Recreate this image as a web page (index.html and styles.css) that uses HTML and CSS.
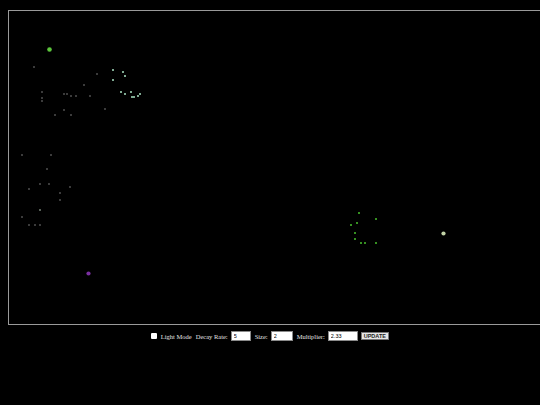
FILE: index.html
```html
<!DOCTYPE html>
<html>
<head>
<meta charset="utf-8">
<title>Particles</title>
<link rel="stylesheet" href="styles.css">
</head>
<body>
<div class="stage">
  <div class="board">
    <svg class="field" viewBox="9 11 560 313" width="560" height="313">
      <!-- faded trail particles -->
      <g class="dim">
        <circle cx="34" cy="67" r="1"/>
        <circle cx="97" cy="74" r="1"/>
        <circle cx="84" cy="85" r="1"/>
        <circle cx="42" cy="92" r="1"/>
        <circle cx="42" cy="98" r="1"/>
        <circle cx="42" cy="101" r="1"/>
        <circle cx="64" cy="94" r="1"/>
        <circle cx="67" cy="94" r="1"/>
        <circle cx="71" cy="96" r="1"/>
        <circle cx="76" cy="96" r="1"/>
        <circle cx="90" cy="96" r="1"/>
        <circle cx="105" cy="109" r="1"/>
        <circle cx="64" cy="110" r="1"/>
        <circle cx="55" cy="115" r="1"/>
        <circle cx="71" cy="115" r="1"/>
        <circle cx="22" cy="155" r="1"/>
        <circle cx="51" cy="155" r="1"/>
        <circle cx="47" cy="169" r="1"/>
        <circle cx="40" cy="184" r="1"/>
        <circle cx="49" cy="184" r="1"/>
        <circle cx="29" cy="189" r="1"/>
        <circle cx="70" cy="187" r="1"/>
        <circle cx="60" cy="193" r="1"/>
        <circle cx="60" cy="200" r="1"/>
        <circle cx="22" cy="217" r="1"/>
        <circle cx="29" cy="225" r="1"/>
        <circle cx="35" cy="225" r="1"/>
        <circle cx="40" cy="225" r="1"/>
      </g>
      <circle class="faded" cx="40" cy="210" r="1"/>
      <!-- mint cluster -->
      <g class="mint">
        <circle cx="113" cy="70" r="1"/>
        <circle cx="123" cy="72" r="1"/>
        <circle cx="125" cy="76" r="1"/>
        <circle cx="113" cy="80" r="1"/>
        <circle cx="121" cy="92" r="1"/>
        <circle cx="125" cy="94" r="1"/>
        <circle cx="131" cy="92" r="1"/>
        <circle cx="140" cy="94" r="1"/>
        <circle cx="138" cy="96" r="1"/>
        <circle cx="134" cy="97" r="1"/>
        <circle cx="132" cy="97" r="1"/>
      </g>
      <!-- green ring -->
      <g class="green">
        <circle cx="359" cy="213" r="1"/>
        <circle cx="376" cy="219" r="1"/>
        <circle cx="351" cy="225" r="1"/>
        <circle cx="357" cy="223" r="1"/>
        <circle cx="355" cy="233" r="1"/>
        <circle cx="355" cy="239" r="1"/>
        <circle cx="361" cy="243" r="1"/>
        <circle cx="365" cy="243" r="1"/>
        <circle cx="376" cy="243" r="1"/>
      </g>
      <!-- emitters -->
      <circle class="lime" cx="49.5" cy="49.5" r="2.3"/>
      <circle class="violet" cx="88.5" cy="273.5" r="2.1"/>
      <circle class="sage" cx="443.5" cy="233.5" r="2.1"/>
    </svg>
  </div>
</div>
<div class="controls">
  <label class="toggle"><input type="checkbox" class="check"> Light Mode</label>
  <label class="field-label" for="decay">Decay Rate:</label>
  <input id="decay" class="num w-decay" type="text" value="5">
  <label class="field-label" for="size">Size:</label>
  <input id="size" class="num w-size" type="text" value="2">
  <label class="field-label" for="mult">Multiplier:</label>
  <input id="mult" class="num w-mult" type="text" value="2.33">
  <button class="update" type="button">UPDATE</button>
</div>
</body>
</html>
```
FILE: styles.css
```css
html, body {
  margin: 0;
  padding: 0;
  background: #000;
  overflow: hidden;
}

body {
  font-family: "Liberation Serif", "Times New Roman", serif;
  color: #e4e4e4;
}

.stage {
  padding: 10px 0 0 8px;
  overflow: hidden;
}

.board {
  width: 560px;
  height: 313px;
  border: 1px solid #9a9a9a;
}

.field {
  display: block;
}

.dim circle { fill: #4f4f4f; }
.faded { fill: #748074; }
.mint circle { fill: #a8e2c2; }
.green circle { fill: #49c02c; }
.lime { fill: #5cc63c; }
.violet { fill: #7a2fa0; }
.sage { fill: #c2d3a6; }

.controls {
  display: flex;
  justify-content: center;
  align-items: center;
  margin-top: 5px;
  height: 12px;
  font-size: 6.5px;
}

.toggle {
  display: flex;
  align-items: center;
  white-space: pre;
}

.check {
  appearance: none;
  width: 6px;
  height: 6px;
  margin: 0 2px 0 0;
  background: #fff;
  border: 0;
  border-radius: 1px;
}

.field-label {
  margin-left: 4px;
  margin-right: 3px;
}

.num {
  box-sizing: border-box;
  height: 10px;
  padding: 0 2px;
  border: 1px solid #8a8a8a;
  background: #fff;
  color: #000;
  font-family: "Liberation Sans", Arial, sans-serif;
  font-size: 5.5px;
  margin: 0;
}

.w-decay { width: 20px; }
.w-size { width: 22px; }
.w-mult { width: 30px; }

.update {
  box-sizing: border-box;
  margin-left: 3px;
  height: 8px;
  width: 28px;
  padding: 0;
  border: 1px solid #777;
  background: #e6e6e6;
  color: #222;
  font-family: "Liberation Sans", Arial, sans-serif;
  font-size: 5.5px;
  font-weight: bold;
  line-height: 6px;
}
```
